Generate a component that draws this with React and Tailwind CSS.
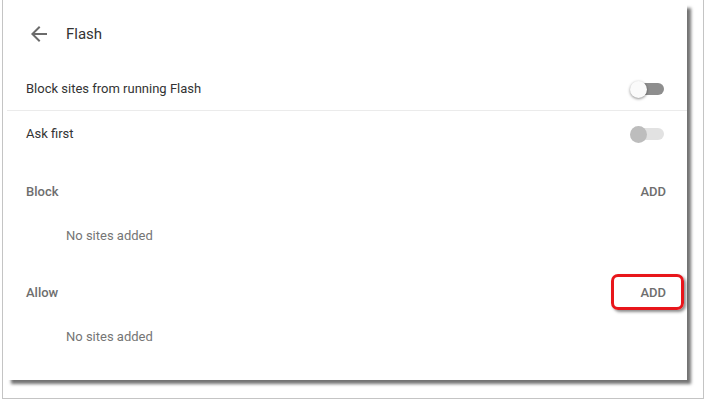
import React from "react";

function Toggle({ disabled }) {
  return (
    <div className="relative w-[34px] h-[18px] flex items-center">
      <div
        className={
          "absolute left-[6px] right-0 h-[12px] rounded-full " +
          (disabled ? "bg-[#e2e2e2]" : "bg-[#8e8e8e]")
        }
      />
      <div
        className={
          "absolute left-0 w-[17px] h-[17px] rounded-full " +
          (disabled
            ? "bg-[#bdbdbd]"
            : "bg-[#fafafa] shadow-[0_1px_3px_rgba(0,0,0,0.45)]")
        }
      />
    </div>
  );
}

export default function App() {
  return (
    <div
      className="w-[706px] h-[401px] bg-white relative overflow-hidden"
      style={{ fontFamily: "Roboto, 'Liberation Sans', sans-serif" }}
    >
      <div className="absolute left-[2px] top-0 w-[702px] h-[399px] border-l border-r border-b border-[#c4c4c4]" />
      <div className="ml-[3px] w-[684px] h-[380px] bg-white shadow-[6px_6px_3px_-2px_rgba(0,0,0,0.55)] flex flex-col">
        <div className="h-[68px] flex items-center pl-[24px]">
          <svg width="24" height="24" viewBox="0 0 24 24" className="shrink-0">
            <path
              d="M20 11H7.83l5.59-5.59L12 4l-8 8 8 8 1.41-1.41L7.83 13H20v-2z"
              fill="#6b6b6b"
            />
          </svg>
          <span className="ml-[15px] text-[15px] text-[#333]">Flash</span>
        </div>
        <div className="h-[42px] flex items-center justify-between pl-[23px] pr-[23px]">
          <span className="text-[13px] text-[#333]">Block sites from running Flash</span>
          <Toggle />
        </div>
        <div className="ml-[4px] h-px bg-[#ebebeb]" />
        <div className="h-px" />
        <div className="h-[44px] flex items-center justify-between pl-[23px] pr-[23px]">
          <span className="text-[13px] text-[#333]">Ask first</span>
          <Toggle disabled />
        </div>
        <div className="h-[14px]" />
        <div className="h-[44px] flex items-center justify-between pl-[23px] pr-[21px]">
          <span className="text-[13px] font-medium text-[#6e6e6e]">Block</span>
          <span className="text-[13px] font-medium text-[#6e6e6e]">ADD</span>
        </div>
        <div className="h-[44px] flex items-center pl-[63px]">
          <span className="text-[13px] text-[#757575]">No sites added</span>
        </div>
        <div className="h-[13px]" />
        <div className="h-[44px] flex items-center justify-between pl-[23px] pr-[21px]">
          <span className="text-[13px] font-medium text-[#6e6e6e]">Allow</span>
          <span className="text-[13px] font-medium text-[#6e6e6e]">ADD</span>
        </div>
        <div className="h-[44px] flex items-center pl-[63px]">
          <span className="text-[13px] text-[#757575]">No sites added</span>
        </div>
      </div>
      <div className="absolute left-[611px] top-[274px] w-[73px] h-[36px] rounded-[7px] border-[3px] border-[#e8161b] shadow-[2px_2px_3px_rgba(0,0,0,0.45)]" />
    </div>
  );
}
